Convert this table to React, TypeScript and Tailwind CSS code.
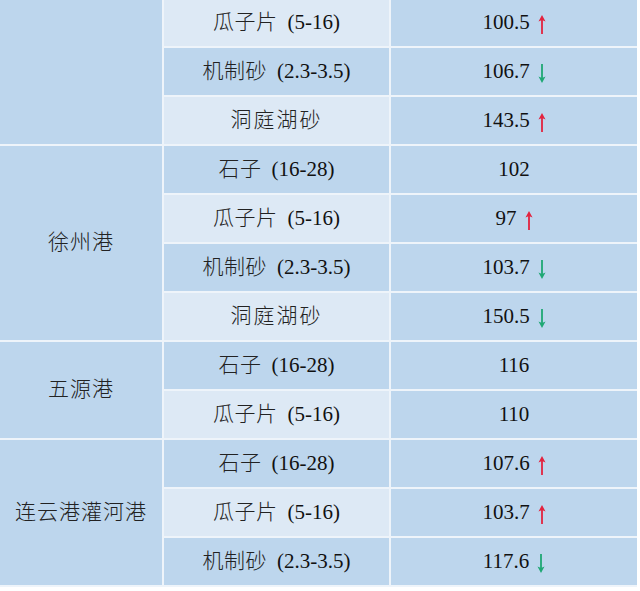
import React from "react";

type Row = { name: string; spec?: string; value: string; dir?: "up" | "down" };

const rows: Row[] = [
  { name: "瓜子片", spec: "(5-16)", value: "100.5", dir: "up" },
  { name: "机制砂", spec: "(2.3-3.5)", value: "106.7", dir: "down" },
  { name: "洞庭湖砂", value: "143.5", dir: "up" },
  { name: "石子", spec: "(16-28)", value: "102" },
  { name: "瓜子片", spec: "(5-16)", value: "97", dir: "up" },
  { name: "机制砂", spec: "(2.3-3.5)", value: "103.7", dir: "down" },
  { name: "洞庭湖砂", value: "150.5", dir: "down" },
  { name: "石子", spec: "(16-28)", value: "116" },
  { name: "瓜子片", spec: "(5-16)", value: "110" },
  { name: "石子", spec: "(16-28)", value: "107.6", dir: "up" },
  { name: "瓜子片", spec: "(5-16)", value: "103.7", dir: "up" },
  { name: "机制砂", spec: "(2.3-3.5)", value: "117.6", dir: "down" },
];

const groups: { label: string; start: number; span: number }[] = [
  { label: "", start: 0, span: 3 },
  { label: "徐州港", start: 3, span: 4 },
  { label: "五源港", start: 7, span: 2 },
  { label: "连云港灌河港", start: 9, span: 3 },
];

function Arrow({ dir }: { dir: "up" | "down" }) {
  const color = dir === "up" ? "#e3233f" : "#1fa874";
  return (
    <svg width="8" height="19" viewBox="0 0 8 19" className="ml-[8px] inline-block relative top-[2px]">
      {dir === "up" ? (
        <>
          <line x1="4" y1="5" x2="4" y2="19" stroke={color} strokeWidth="1.8" />
          <path d="M4 0 L7.5 6.5 L4 5 L0.5 6.5 Z" fill={color} />
        </>
      ) : (
        <>
          <line x1="4" y1="0" x2="4" y2="14" stroke={color} strokeWidth="1.8" />
          <path d="M4 19 L7.5 12.5 L4 14 L0.5 12.5 Z" fill={color} />
        </>
      )}
    </svg>
  );
}

export default function App() {
  const cells: React.ReactNode[] = [];
  rows.forEach((r, i) => {
    const g = groups.find((g) => g.start === i);
    if (g) {
      const spanCls =
        g.span === 4 ? "row-span-4" : g.span === 3 ? "row-span-3" : "row-span-2";
      cells.push(
        <div
          key={"g" + i}
          className={`${spanCls} col-start-1 bg-[#bdd6ed] flex items-center justify-center text-[21px] tracking-[1px] font-light text-[#222]`}
        >
          {g.label}
        </div>
      );
    }
    const light = i % 2 === 0;
    cells.push(
      <div
        key={"n" + i}
        className={`${light ? "bg-[#dde9f5]" : "bg-[#bdd6ed]"} flex items-center justify-center text-[21px] text-[#222]`}
      >
        <span className={`font-light ${r.spec ? "tracking-[0.5px]" : "tracking-[2px]"}`}>{r.name}</span>
        {r.spec && <span className="ml-[10px] text-[21px] text-[#111]">{r.spec}</span>}
      </div>
    );
    cells.push(
      <div
        key={"v" + i}
        className="bg-[#bdd6ed] flex items-center justify-center text-[21px] text-[#111]"
      >
        <span>{r.value}</span>
        {r.dir && <Arrow dir={r.dir} />}
      </div>
    );
  });

  return (
    <div
      className="w-[640px] h-[591px] bg-white overflow-hidden"
      style={{ fontFamily: '"Liberation Serif", "Noto Sans CJK SC", serif' }}
    >
      <div className="w-[637px] bg-[#eef4fa] grid grid-cols-[162px_225px_246px] grid-rows-[repeat(12,47px)] gap-[2px] pr-[2px] pb-[2px] -mt-[1px]">
        {cells}
      </div>
    </div>
  );
}
